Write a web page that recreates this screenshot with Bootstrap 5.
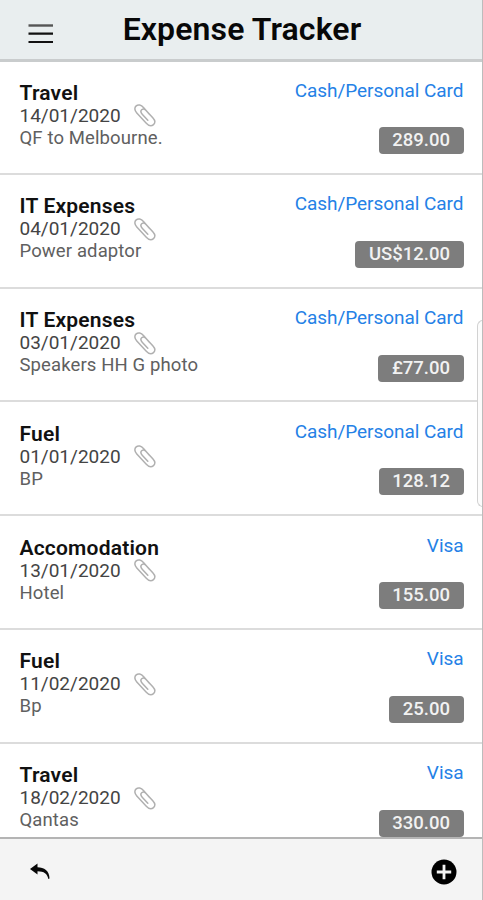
<!DOCTYPE html>
<html lang="en">
<head>
<meta charset="utf-8">
<meta name="viewport" content="width=device-width, initial-scale=1">
<title>Expense Tracker</title>
<link href="https://cdn.jsdelivr.net/npm/bootstrap@5.3.0/dist/css/bootstrap.min.css" rel="stylesheet">
<style>
body{font-family:Roboto,"Liberation Sans",sans-serif;color:#111;background:#fff}
.app{height:900px;border-right:1px solid #bcbcbc}
.top-bar{height:62px;background:#e9eeef;border-bottom:3px solid #c9cccd;z-index:2;padding:0 26px 0 27px;margin-right:-1px}
.app-title{font-size:32px;font-weight:600;line-height:59px;letter-spacing:.12px;color:#080808}
.menu-btn,.menu-space{width:27px}
.menu-btn{padding-top:1px!important}
.entries{margin-top:-1px}
.entry{height:113.75px;border-bottom:2px solid #dcdcdc;padding:20.6px 18.5px 0 19.5px}
.entry-name{font-size:21px;font-weight:600;line-height:23px;letter-spacing:.2px}
.entry-date{font-size:19px;line-height:22px;color:#444}
.entry-note{font-size:18.5px;line-height:22.400px;letter-spacing:.12px;color:#606060}
.clip{margin:-1.600px 0 -1px 13.500px}
.entry-account{font-size:19px;line-height:22px;letter-spacing:-.05px;color:#2481e6;margin-top:-2px}
.entry-amount{font-size:18.5px;font-weight:500;line-height:27px;height:27px;padding:0 13.5px;border-radius:4px;background:#7d7d7d;color:#f2f2f2;margin-top:25.600px}
.bottom-bar{height:63px;background:#f4f4f4;border-top:2px solid #b4b4b4;padding:5px 25px 0 29px;z-index:2}
.scroll-handle{top:320px;right:-1px;width:6px;height:187px;border:1px solid #d2d2d2;border-right:0;border-radius:6px 0 0 6px;background:#fcfcfc;z-index:3}
</style>
<script src="https://cdn.jsdelivr.net/npm/bootstrap@5.3.0/dist/js/bootstrap.bundle.min.js"></script>
</head>
<body class="overflow-hidden">
<svg class="d-none">
<symbol id="clip" viewBox="0 0 22 24"><path d="M15.600 11.500L9.700 4.800C7 1.700 4.200 1.100 2.200 2.900S.5 7.500 2.800 10L12.300 20.300C15 23.200 17.600 23.300 19.500 21.600S21.400 17.500 19 14.900L12.300 7.700C10.500 5.700 8.800 5.800 7.700 6.800S6.700 9.500 8.200 11.200L13.800 17.300" fill="none" stroke="#b0b0b0" stroke-width="1.500" stroke-linecap="round"/></symbol>
</svg>
<div class="app position-relative d-flex flex-column overflow-hidden">
<header class="top-bar position-relative flex-shrink-0 d-flex justify-content-between">
<button class="menu-btn btn p-0 border-0" aria-label="Menu"><svg class="d-block mt-2" width="27" height="22" viewBox="0 0 27 22"><path d="M1.500 2.500h24.500" stroke="#555" stroke-width="2.400"/><path d="M1.500 10.700h24.500M1.500 19h24.500" stroke="#111" stroke-width="2.200"/></svg></button>
<h1 class="app-title m-0">Expense Tracker</h1>
<span class="menu-space"></span>
</header>
<main class="entries flex-grow-1 overflow-hidden">
<section class="entry d-flex justify-content-between"><div><div class="entry-name">Travel</div><div class="entry-date d-flex">14/01/2020<svg class="clip" width="22" height="24"><use href="#clip"/></svg></div><div class="entry-note">QF to Melbourne.</div></div><div class="d-flex flex-column align-items-end"><div class="entry-account">Cash/Personal Card</div><div class="entry-amount">289.00</div></div></section>
<section class="entry d-flex justify-content-between"><div><div class="entry-name">IT Expenses</div><div class="entry-date d-flex">04/01/2020<svg class="clip" width="22" height="24"><use href="#clip"/></svg></div><div class="entry-note">Power adaptor</div></div><div class="d-flex flex-column align-items-end"><div class="entry-account">Cash/Personal Card</div><div class="entry-amount">US$12.00</div></div></section>
<section class="entry d-flex justify-content-between"><div><div class="entry-name">IT Expenses</div><div class="entry-date d-flex">03/01/2020<svg class="clip" width="22" height="24"><use href="#clip"/></svg></div><div class="entry-note">Speakers HH G photo</div></div><div class="d-flex flex-column align-items-end"><div class="entry-account">Cash/Personal Card</div><div class="entry-amount">£77.00</div></div></section>
<section class="entry d-flex justify-content-between"><div><div class="entry-name">Fuel</div><div class="entry-date d-flex">01/01/2020<svg class="clip" width="22" height="24"><use href="#clip"/></svg></div><div class="entry-note">BP</div></div><div class="d-flex flex-column align-items-end"><div class="entry-account">Cash/Personal Card</div><div class="entry-amount">128.12</div></div></section>
<section class="entry d-flex justify-content-between"><div><div class="entry-name">Accomodation</div><div class="entry-date d-flex">13/01/2020<svg class="clip" width="22" height="24"><use href="#clip"/></svg></div><div class="entry-note">Hotel</div></div><div class="d-flex flex-column align-items-end"><div class="entry-account">Visa</div><div class="entry-amount">155.00</div></div></section>
<section class="entry d-flex justify-content-between"><div><div class="entry-name">Fuel</div><div class="entry-date d-flex">11/02/2020<svg class="clip" width="22" height="24"><use href="#clip"/></svg></div><div class="entry-note">Bp</div></div><div class="d-flex flex-column align-items-end"><div class="entry-account">Visa</div><div class="entry-amount">25.00</div></div></section>
<section class="entry d-flex justify-content-between"><div><div class="entry-name">Travel</div><div class="entry-date d-flex">18/02/2020<svg class="clip" width="22" height="24"><use href="#clip"/></svg></div><div class="entry-note">Qantas</div></div><div class="d-flex flex-column align-items-end"><div class="entry-account">Visa</div><div class="entry-amount">330.00</div></div></section>
</main>
<footer class="bottom-bar flex-shrink-0 d-flex align-items-center justify-content-between">
<button class="btn p-0 border-0" aria-label="Back"><svg class="d-block" width="22" height="20" viewBox="0 0 22 20"><path d="M1 7L8.500 1.500V5.200C15 5.200 20.500 8.500 20.500 16.500L19.300 17C18.500 12 15 9.300 8.500 9.300V12.500Z" fill="#080808"/></svg></button>
<button class="btn p-0 border-0" aria-label="Add expense"><svg class="d-block" width="26" height="26" viewBox="0 0 26 26"><circle cx="13" cy="13" r="12.500" fill="#000"/><path d="M13 5.800v14.400M5.800 13h14.400" stroke="#f4f4f4" stroke-width="2.800"/></svg></button>
</footer>
<div class="scroll-handle position-absolute"></div>
</div>
</body>
</html>
